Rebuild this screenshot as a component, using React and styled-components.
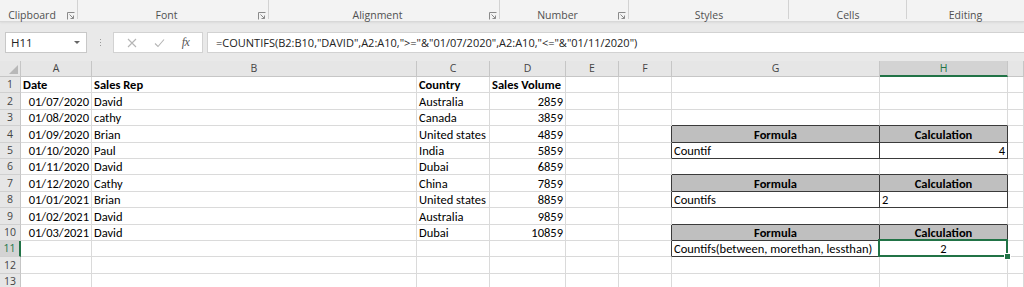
import React from "react";
import styled, { createGlobalStyle, css } from "styled-components";

const GlobalStyle = createGlobalStyle`
  html, body { margin: 0; padding: 0; background: #ffffff; overflow: hidden; }
  body { width: 1024px; height: 287px; font-family: "Open Sans", "Noto Sans", sans-serif; }
  * { box-sizing: border-box; }
`;

const GREEN = "#217346";
const GRID = "#dadada";
const DARK = "#3a3a3a";

const Page = styled.div`
  width: 1024px;
  height: 287px;
  overflow: hidden;
  display: flex;
  flex-direction: column;
`;

/* ---------- Ribbon ---------- */
const Ribbon = styled.div`
  height: 22px;
  flex: none;
  display: flex;
  align-items: stretch;
  background: #f3f3f3;
  border-bottom: 1px solid #d8d8d8;
  box-shadow: 0 1px 2px rgba(0, 0, 0, 0.06);
  position: relative;
  z-index: 1;
`;

const Group = styled.div`
  width: ${(p) => p.$w}px;
  display: flex;
  align-items: flex-start;
  padding-top: 9px;
  position: relative;
  &::after {
    content: "";
    display: ${(p) => (p.$last ? "none" : "block")};
    position: absolute;
    right: 0;
    top: 0;
    width: 1px;
    height: 19px;
    background: #d2d2d2;
  }
`;

const GroupLabel = styled.span`
  flex: 1;
  text-align: center;
  font-size: 10.5px;
  line-height: 13px;
  color: #505050;
`;

const Launcher = styled.span`
  width: 14px;
  height: 13px;
  display: flex;
  align-items: center;
  justify-content: center;
`;

const LauncherIcon = () => (
  <svg width="8" height="8" viewBox="0 0 8 8">
    <path d="M0.5 7.5V0.5H7.5" fill="none" stroke="#8a8a8a" strokeWidth="1" />
    <path d="M2.5 2.5L6.5 6.5M6.5 3.5V6.5H3.5" fill="none" stroke="#8a8a8a" strokeWidth="1" />
  </svg>
);

/* ---------- Formula bar ---------- */
const FormulaArea = styled.div`
  height: 39px;
  flex: none;
  display: flex;
  align-items: flex-start;
  padding-top: 10px;
  background: #e9e9e9;
`;

const NameBox = styled.div`
  margin-left: 5px;
  width: 82px;
  height: 21px;
  background: #fff;
  border: 1px solid #c8c8c8;
  display: flex;
  align-items: center;
  justify-content: space-between;
  padding: 0 6px 0 5px;
  font-size: 11.5px;
  color: #222;
`;

const Caret = styled.span`
  width: 0;
  height: 0;
  border-left: 3px solid transparent;
  border-right: 3px solid transparent;
  border-top: 3px solid #666;
`;

const Grip = styled.div`
  width: 26px;
  height: 21px;
  display: flex;
  flex-direction: column;
  align-items: center;
  justify-content: center;
  gap: 2px;
  span {
    width: 1px;
    height: 1px;
    background: #9a9a9a;
  }
`;

const ButtonBox = styled.div`
  width: 90px;
  height: 21px;
  background: #fff;
  border: 1px solid #d2d2d2;
  display: flex;
  align-items: center;
  justify-content: space-around;
  padding: 0 4px;
`;

const FxLabel = styled.span`
  font-family: "Liberation Serif", serif;
  font-style: italic;
  font-size: 12px;
  color: #555;
  letter-spacing: -0.5px;
`;

const FormulaInput = styled.div`
  margin-left: 4px;
  flex: 1;
  height: 21px;
  background: #fff;
  border: 1px solid #d2d2d2;
  border-right: none;
  display: flex;
  align-items: center;
  padding-left: 8px;
  font-size: 11px;
  color: #222;
  white-space: nowrap;
`;

/* ---------- Sheet ---------- */
const COLS = "21px 71px 325px 73px 76px 53px 53px 208px 128px 1fr";

const Sheet = styled.div`
  flex: 1;
  display: grid;
  grid-template-columns: ${COLS};
  grid-template-rows: 16px repeat(13, 16.4px);
  background: #fff;
  overflow: hidden;
`;

const Corner = styled.div`
  background: #e6e6e6;
  border-right: 1px solid #c6c6c6;
  border-bottom: 1px solid #c6c6c6;
  position: relative;
  &::after {
    content: "";
    position: absolute;
    right: 2px;
    bottom: 2px;
    width: 0;
    height: 0;
    border-left: 9px solid transparent;
    border-bottom: 9px solid #b8b8b8;
  }
`;

const ColHeader = styled.div`
  background: ${(p) => (p.$sel ? "#d3d3d3" : "#e6e6e6")};
  color: ${(p) => (p.$sel ? GREEN : "#444")};
  border-right: 1px solid #c6c6c6;
  border-bottom: ${(p) => (p.$sel ? `2px solid ${GREEN}` : "1px solid #c6c6c6")};
  font-size: 10.5px;
  display: flex;
  align-items: center;
  justify-content: center;
  line-height: 1;
`;

const RowHeader = styled.div`
  background: ${(p) => (p.$sel ? "#d3d3d3" : "#e6e6e6")};
  color: ${(p) => (p.$sel ? GREEN : "#444")};
  border-right: ${(p) => (p.$sel ? `2px solid ${GREEN}` : "1px solid #c6c6c6")};
  border-bottom: 1px solid #d0d0d0;
  font-size: 10.5px;
  display: flex;
  align-items: center;
  justify-content: center;
  line-height: 1;
`;

const Cell = styled.div`
  position: relative;
  border-right: 1px solid ${(p) => (p.$darkRight ? DARK : GRID)};
  border-bottom: 1px solid ${(p) => (p.$darkBottom ? DARK : GRID)};
  background: ${(p) => (p.$head ? "#bfbfbf" : "#fff")};
  font-family: Carlito, Calibri, Lato, sans-serif;
  font-size: 12.5px;
  font-weight: ${(p) => (p.$bold ? 700 : 400)};
  color: #000;
  display: flex;
  align-items: flex-end;
  justify-content: ${(p) =>
    p.$align === "right" ? "flex-end" : p.$align === "center" ? "center" : "flex-start"};
  padding: 0 2px 0 2px;
  white-space: nowrap;
  overflow: visible;
  line-height: 15px;
  ${(p) =>
    p.$selected &&
    css`
      &::after {
        content: "";
        position: absolute;
        left: -2px;
        top: -2px;
        right: -1px;
        bottom: -1px;
        border: 2px solid ${GREEN};
        pointer-events: none;
      }
      &::before {
        content: "";
        position: absolute;
        right: -4px;
        bottom: -4px;
        width: 5px;
        height: 5px;
        background: ${GREEN};
        border: 1px solid #fff;
        z-index: 2;
      }
    `}
`;

const COL_LETTERS = ["A", "B", "C", "D", "E", "F", "G", "H", ""];

const DATA = [
  ["Date", "Sales Rep", "Country", "Sales Volume"],
  ["01/07/2020", "David", "Australia", "2859"],
  ["01/08/2020", "cathy", "Canada", "3859"],
  ["01/09/2020", "Brian", "United states", "4859"],
  ["01/10/2020", "Paul", "India", "5859"],
  ["01/11/2020", "David", "Dubai", "6859"],
  ["01/12/2020", "Cathy", "China", "7859"],
  ["01/01/2021", "Brian", "United states", "8859"],
  ["01/02/2021", "David", "Australia", "9859"],
  ["01/03/2021", "David", "Dubai", "10859"],
];

// summary tables in G/H (col index 6,7), keyed by row number
const SUMMARY = {
  4: { head: true, g: "Formula", h: "Calculation" },
  5: { g: "Countif", h: "4", hAlign: "right" },
  7: { head: true, g: "Formula", h: "Calculation" },
  8: { g: "Countifs", h: "2", hAlign: "left" },
  10: { head: true, g: "Formula", h: "Calculation" },
  11: { g: "Countifs(between, morethan, lessthan)", h: "2", hAlign: "center" },
};

const inTable = (r, c) => (c === 6 || c === 7) && SUMMARY[r] !== undefined;

function cellContent(r, c) {
  if (r <= 10 && c <= 3) {
    const v = DATA[r - 1][c];
    if (r === 1) return { text: v, bold: true, align: "left" };
    if (c === 0 || c === 3) return { text: v, align: "right" };
    return { text: v, align: "left" };
  }
  const s = SUMMARY[r];
  if (s && c === 6) return { text: s.g, bold: s.head, align: s.head ? "center" : "left", head: s.head };
  if (s && c === 7)
    return { text: s.h, bold: s.head, align: s.head ? "center" : s.hAlign, head: s.head };
  return { text: "" };
}

const SEL_ROW = 11;
const SEL_COL = 7;

export default function App() {
  const groups = [
    { label: "Clipboard", w: 78, launcher: true },
    { label: "Font", w: 191, launcher: true },
    { label: "Alignment", w: 231, launcher: true },
    { label: "Number", w: 129, launcher: true },
    { label: "Styles", w: 160 },
    { label: "Cells", w: 118 },
    { label: "Editing", w: 117, last: true },
  ];

  const rows = [];
  for (let r = 1; r <= 13; r++) {
    rows.push(
      <RowHeader key={`rh${r}`} $sel={r === SEL_ROW}>
        {r}
      </RowHeader>
    );
    for (let c = 0; c < 9; c++) {
      const info = cellContent(r, c);
      const darkBottom = inTable(r, c) || inTable(r + 1, c);
      const darkRight = inTable(r, c) || inTable(r, c + 1);
      rows.push(
        <Cell
          key={`c${r}-${c}`}
          $align={info.align}
          $bold={info.bold}
          $head={info.head}
          $darkBottom={darkBottom}
          $darkRight={darkRight}
          $selected={r === SEL_ROW && c === SEL_COL}
        >
          {info.text}
        </Cell>
      );
    }
  }

  return (
    <Page>
      <GlobalStyle />
      <Ribbon>
        {groups.map((g) => (
          <Group key={g.label} $w={g.w} $last={g.last}>
            <GroupLabel>{g.label}</GroupLabel>
            {g.launcher && (
              <Launcher>
                <LauncherIcon />
              </Launcher>
            )}
          </Group>
        ))}
      </Ribbon>
      <FormulaArea>
        <NameBox>
          <span>H11</span>
          <Caret />
        </NameBox>
        <Grip>
          <span />
          <span />
          <span />
        </Grip>
        <ButtonBox>
          <svg width="10" height="10" viewBox="0 0 10 10">
            <path d="M1 1L9 9M9 1L1 9" stroke="#b5b5b5" strokeWidth="1.1" fill="none" />
          </svg>
          <svg width="11" height="10" viewBox="0 0 11 10">
            <path d="M1 5.5L4 8.5L10 1.5" stroke="#b5b5b5" strokeWidth="1.1" fill="none" />
          </svg>
          <FxLabel>fx</FxLabel>
        </ButtonBox>
        <FormulaInput>
          =COUNTIFS(B2:B10,"DAVID",A2:A10,"&gt;="&amp;"01/07/2020",A2:A10,"&lt;="&amp;"01/11/2020")
        </FormulaInput>
      </FormulaArea>
      <Sheet>
        <Corner />
        {COL_LETTERS.map((l, i) => (
          <ColHeader key={`ch${i}`} $sel={i === SEL_COL}>
            {l}
          </ColHeader>
        ))}
        {rows}
      </Sheet>
    </Page>
  );
}
